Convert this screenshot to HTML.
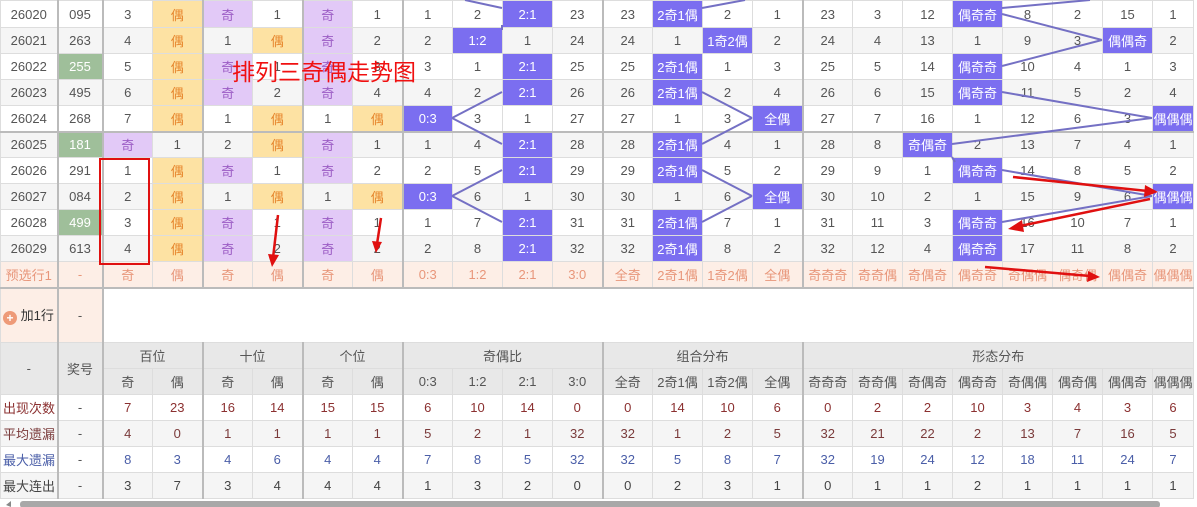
<!DOCTYPE html>
<html><head><meta charset="utf-8">
<style>
*{margin:0;padding:0;box-sizing:border-box}
body{width:1197px;height:507px;overflow:hidden;background:#fff;position:relative;font-family:"Liberation Sans","Noto Sans CJK SC",sans-serif;font-size:13px;color:#555}
table{border-collapse:collapse;table-layout:fixed;width:1193px;position:absolute;left:0;top:0}
td{border:1px solid #ddd;text-align:center;white-space:nowrap;overflow:hidden;height:26px;padding:0}
col.g{border-left:2px solid #bbb}
tr.a td{background:#f5f5f5}
tr.w td{background:#fff}
tr.f td{height:27px}
tr.sep td{border-bottom:2px solid #bbb}
td.o{background:#e2c9f7!important;color:#9b5cc4}
td.e{background:#fde2a3!important;color:#e6852b}
td.b{background:#7b6ef0!important;color:#fff}
td.gr{background:#9fbf9a!important;color:#fff}
tr.p td{background:#fdeee6;color:#e8967a;border-bottom:2px solid #bbb}
tr.add td{height:55px}
tr.h td{background:#e8e8e8;color:#555}
tr.s1 td{color:#8b3030}
tr.s2 td{color:#7a3a3a}
tr.s3 td{color:#4a5ea8}
tr.s4 td{color:#444}
.s1 td:first-child,.s2 td:first-child,.s3 td:first-child,.s4 td:first-child{text-align:left;padding-left:2px}
</style></head><body>
<table>
<colgroup><col style="width:57px"><col class="g" style="width:45px"><col class="g" style="width:50px"><col style="width:50px"><col class="g" style="width:50px"><col style="width:50px"><col class="g" style="width:50px"><col style="width:50px"><col class="g" style="width:50px"><col style="width:50px"><col style="width:50px"><col style="width:50px"><col class="g" style="width:50px"><col style="width:50px"><col style="width:50px"><col style="width:50px"><col class="g" style="width:50px"><col style="width:50px"><col style="width:50px"><col style="width:50px"><col style="width:50px"><col style="width:50px"><col style="width:50px"><col style="width:41px"></colgroup>
<tr class="w f"><td>26020</td><td>095</td><td>3</td><td class="e">偶</td><td class="o">奇</td><td>1</td><td class="o">奇</td><td>1</td><td>1</td><td>2</td><td class="b">2:1</td><td>23</td><td>23</td><td class="b">2奇1偶</td><td>2</td><td>1</td><td>23</td><td>3</td><td>12</td><td class="b">偶奇奇</td><td>8</td><td>2</td><td>15</td><td>1</td></tr>
<tr class="a"><td>26021</td><td>263</td><td>4</td><td class="e">偶</td><td>1</td><td class="e">偶</td><td class="o">奇</td><td>2</td><td>2</td><td class="b">1:2</td><td>1</td><td>24</td><td>24</td><td>1</td><td class="b">1奇2偶</td><td>2</td><td>24</td><td>4</td><td>13</td><td>1</td><td>9</td><td>3</td><td class="b">偶偶奇</td><td>2</td></tr>
<tr class="w"><td>26022</td><td class="gr">255</td><td>5</td><td class="e">偶</td><td class="o">奇</td><td>1</td><td class="o">奇</td><td>3</td><td>3</td><td>1</td><td class="b">2:1</td><td>25</td><td>25</td><td class="b">2奇1偶</td><td>1</td><td>3</td><td>25</td><td>5</td><td>14</td><td class="b">偶奇奇</td><td>10</td><td>4</td><td>1</td><td>3</td></tr>
<tr class="a"><td>26023</td><td>495</td><td>6</td><td class="e">偶</td><td class="o">奇</td><td>2</td><td class="o">奇</td><td>4</td><td>4</td><td>2</td><td class="b">2:1</td><td>26</td><td>26</td><td class="b">2奇1偶</td><td>2</td><td>4</td><td>26</td><td>6</td><td>15</td><td class="b">偶奇奇</td><td>11</td><td>5</td><td>2</td><td>4</td></tr>
<tr class="w sep"><td>26024</td><td>268</td><td>7</td><td class="e">偶</td><td>1</td><td class="e">偶</td><td>1</td><td class="e">偶</td><td class="b">0:3</td><td>3</td><td>1</td><td>27</td><td>27</td><td>1</td><td>3</td><td class="b">全偶</td><td>27</td><td>7</td><td>16</td><td>1</td><td>12</td><td>6</td><td>3</td><td class="b">偶偶偶</td></tr>
<tr class="a"><td>26025</td><td class="gr">181</td><td class="o">奇</td><td>1</td><td>2</td><td class="e">偶</td><td class="o">奇</td><td>1</td><td>1</td><td>4</td><td class="b">2:1</td><td>28</td><td>28</td><td class="b">2奇1偶</td><td>4</td><td>1</td><td>28</td><td>8</td><td class="b">奇偶奇</td><td>2</td><td>13</td><td>7</td><td>4</td><td>1</td></tr>
<tr class="w"><td>26026</td><td>291</td><td>1</td><td class="e">偶</td><td class="o">奇</td><td>1</td><td class="o">奇</td><td>2</td><td>2</td><td>5</td><td class="b">2:1</td><td>29</td><td>29</td><td class="b">2奇1偶</td><td>5</td><td>2</td><td>29</td><td>9</td><td>1</td><td class="b">偶奇奇</td><td>14</td><td>8</td><td>5</td><td>2</td></tr>
<tr class="a"><td>26027</td><td>084</td><td>2</td><td class="e">偶</td><td>1</td><td class="e">偶</td><td>1</td><td class="e">偶</td><td class="b">0:3</td><td>6</td><td>1</td><td>30</td><td>30</td><td>1</td><td>6</td><td class="b">全偶</td><td>30</td><td>10</td><td>2</td><td>1</td><td>15</td><td>9</td><td>6</td><td class="b">偶偶偶</td></tr>
<tr class="w"><td>26028</td><td class="gr">499</td><td>3</td><td class="e">偶</td><td class="o">奇</td><td>1</td><td class="o">奇</td><td>1</td><td>1</td><td>7</td><td class="b">2:1</td><td>31</td><td>31</td><td class="b">2奇1偶</td><td>7</td><td>1</td><td>31</td><td>11</td><td>3</td><td class="b">偶奇奇</td><td>16</td><td>10</td><td>7</td><td>1</td></tr>
<tr class="a"><td>26029</td><td>613</td><td>4</td><td class="e">偶</td><td class="o">奇</td><td>2</td><td class="o">奇</td><td>2</td><td>2</td><td>8</td><td class="b">2:1</td><td>32</td><td>32</td><td class="b">2奇1偶</td><td>8</td><td>2</td><td>32</td><td>12</td><td>4</td><td class="b">偶奇奇</td><td>17</td><td>11</td><td>8</td><td>2</td></tr>
<tr class="p"><td>预选行1</td><td>-</td><td>奇</td><td>偶</td><td>奇</td><td>偶</td><td>奇</td><td>偶</td><td>0:3</td><td>1:2</td><td>2:1</td><td>3:0</td><td>全奇</td><td>2奇1偶</td><td>1奇2偶</td><td>全偶</td><td>奇奇奇</td><td>奇奇偶</td><td>奇偶奇</td><td>偶奇奇</td><td>奇偶偶</td><td>偶奇偶</td><td>偶偶奇</td><td>偶偶偶</td></tr>
<tr class="add"><td style="background:#fdeee6;color:#333;text-align:left;padding-left:2px"><span style="display:inline-block;width:14px;height:14px;border-radius:50%;background:#ee9a78;color:#fff;font-size:12px;line-height:14px;text-align:center;vertical-align:-2px;font-weight:bold">+</span> 加1行</td><td style="background:#fdeee6">-</td><td colspan="22" style="background:#fff"></td></tr>
<tr class="h"><td rowspan="2">-</td><td rowspan="2">奖号</td><td colspan="2">百位</td><td colspan="2">十位</td><td colspan="2">个位</td><td colspan="4">奇偶比</td><td colspan="4">组合分布</td><td colspan="8">形态分布</td></tr>
<tr class="h"><td>奇</td><td>偶</td><td>奇</td><td>偶</td><td>奇</td><td>偶</td><td>0:3</td><td>1:2</td><td>2:1</td><td>3:0</td><td>全奇</td><td>2奇1偶</td><td>1奇2偶</td><td>全偶</td><td>奇奇奇</td><td>奇奇偶</td><td>奇偶奇</td><td>偶奇奇</td><td>奇偶偶</td><td>偶奇偶</td><td>偶偶奇</td><td>偶偶偶</td></tr>
<tr class="w s1"><td>出现次数</td><td style="color:#555">-</td><td>7</td><td>23</td><td>16</td><td>14</td><td>15</td><td>15</td><td>6</td><td>10</td><td>14</td><td>0</td><td>0</td><td>14</td><td>10</td><td>6</td><td>0</td><td>2</td><td>2</td><td>10</td><td>3</td><td>4</td><td>3</td><td>6</td></tr>
<tr class="a s2"><td>平均遗漏</td><td style="color:#555">-</td><td>4</td><td>0</td><td>1</td><td>1</td><td>1</td><td>1</td><td>5</td><td>2</td><td>1</td><td>32</td><td>32</td><td>1</td><td>2</td><td>5</td><td>32</td><td>21</td><td>22</td><td>2</td><td>13</td><td>7</td><td>16</td><td>5</td></tr>
<tr class="w s3"><td>最大遗漏</td><td style="color:#555">-</td><td>8</td><td>3</td><td>4</td><td>6</td><td>4</td><td>4</td><td>7</td><td>8</td><td>5</td><td>32</td><td>32</td><td>5</td><td>8</td><td>7</td><td>32</td><td>19</td><td>24</td><td>12</td><td>18</td><td>11</td><td>24</td><td>7</td></tr>
<tr class="a s4"><td>最大连出</td><td style="color:#555">-</td><td>3</td><td>7</td><td>3</td><td>4</td><td>4</td><td>4</td><td>1</td><td>3</td><td>2</td><td>0</td><td>0</td><td>2</td><td>3</td><td>1</td><td>0</td><td>1</td><td>1</td><td>2</td><td>1</td><td>1</td><td>1</td><td>1</td></tr>
</table>
<svg width="1197" height="507" style="position:absolute;left:0;top:0" xmlns="http://www.w3.org/2000/svg">
<g stroke="#7470c4" stroke-width="2" fill="none">
<line x1="465" y1="0" x2="502" y2="8"/>
<line x1="502" y1="25" x2="502" y2="30"/>
<line x1="502" y1="92" x2="452" y2="118"/>
<line x1="452" y1="118" x2="502" y2="144"/>
<line x1="502" y1="170" x2="452" y2="196"/>
<line x1="452" y1="196" x2="502" y2="222"/>
<line x1="745" y1="0" x2="702" y2="8"/>
<line x1="702" y1="92" x2="752" y2="118"/>
<line x1="752" y1="118" x2="702" y2="144"/>
<line x1="702" y1="170" x2="752" y2="196"/>
<line x1="752" y1="196" x2="702" y2="222"/>
<line x1="1090" y1="0" x2="1002" y2="8"/>
<line x1="1002" y1="14" x2="1102" y2="40"/>
<line x1="1102" y1="40" x2="1002" y2="66"/>
<line x1="1002" y1="92" x2="1152" y2="118"/>
<line x1="1152" y1="118" x2="952" y2="144"/>
<line x1="952" y1="157" x2="955" y2="162"/>
<line x1="1002" y1="170" x2="1152" y2="196"/>
<line x1="1152" y1="196" x2="1002" y2="222"/>
</g>
<text x="232" y="80" font-size="23" fill="#f01010" font-family="Liberation Sans,Noto Sans CJK SC,sans-serif">排列三奇偶走势图</text>
<rect x="100" y="159" width="49" height="105" fill="none" stroke="#e01010" stroke-width="2"/>
<g stroke="#e01010" stroke-width="2.5" fill="#e01010">
<line x1="278" y1="215" x2="273" y2="258"/><polygon points="268,254 279,255 272,267" stroke="none"/>
<line x1="381" y1="218" x2="377" y2="244"/><polygon points="372,241 382,242 376,253" stroke="none"/>
<line x1="1013" y1="177" x2="1148" y2="191"/><polygon points="1145,185 1158,192 1144,197" stroke="none"/>
<line x1="1150" y1="199" x2="1020" y2="226"/><polygon points="1022,220 1008,229 1024,232" stroke="none"/>
<line x1="985" y1="267" x2="1090" y2="276"/><polygon points="1088,271 1100,277 1087,282" stroke="none"/>
</g>
<rect x="0" y="500" width="1197" height="7" fill="#fff"/>
<rect x="20" y="501" width="1140" height="7" rx="3" fill="#a8a8a8"/>
<polygon points="6,505 11,501 11,507" fill="#888"/>
</svg>
</body></html>
